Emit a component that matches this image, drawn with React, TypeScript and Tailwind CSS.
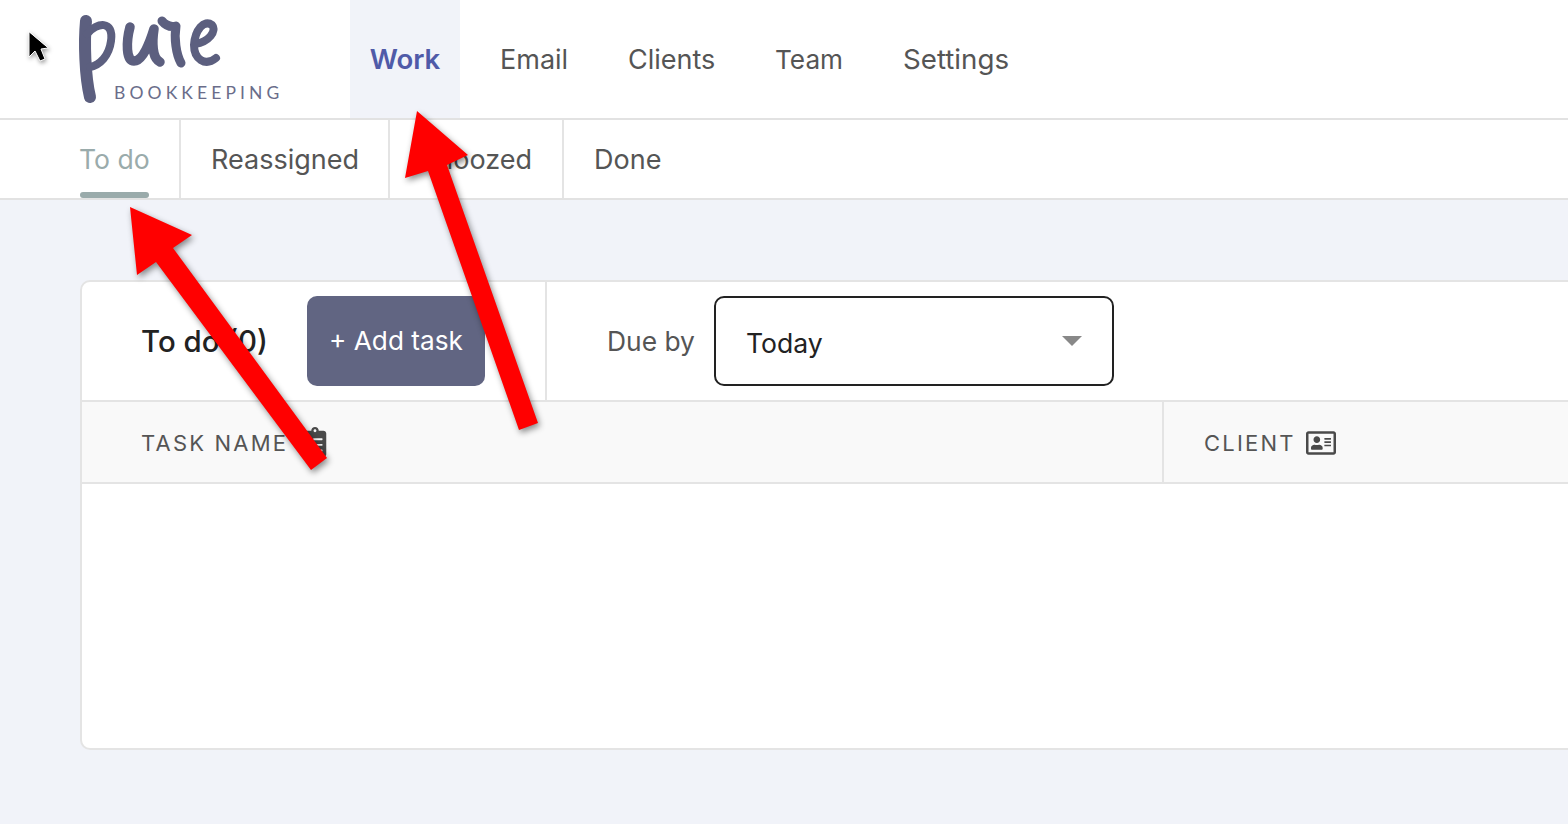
import React from 'react';
import { FaClipboardList, FaRegAddressCard } from 'react-icons/fa';

const navItems = [
  { label: 'Email', cls: 'w-[108px]' },
  { label: 'Clients', cls: 'w-[127px]' },
  { label: 'Team', cls: 'w-[108px] text-[26.2px]' },
  { label: 'Settings', cls: 'w-[146px] text-[27.7px]' },
];

const Logo: React.FC = () => (
  <div className="relative w-[350px] h-full shrink-0">
    <svg width="240" height="118" viewBox="0 0 240 118" className="absolute left-0 top-0" fill="none" stroke="#5c5f7f" strokeLinecap="round" strokeLinejoin="round">
      {/* cursor */}
      <path d="M29 32 L29 57 L35 51 L40 61 L45 59 L41 49 L48 48 Z" fill="#000" stroke="#fff" strokeWidth="1" className="drop-shadow-[1px_2px_2px_rgba(0,0,0,0.4)]" />
      {/* pure script mark */}
      <path d="M86 21 C84 42 85 76 90 97" strokeWidth="12" />
      <path d="M87 34 C97 22 114 20 111 41 C109 56 100 65 90 67" strokeWidth="8" />
      <path d="M130 27 C126 42 126 61 134 61 C143 61 150 42 154 29 C152 42 152 58 160 62" strokeWidth="9.5" />
      <path d="M162 21 C167 27 172 27 176 26 C174 38 176 54 181 63" strokeWidth="9" />
      <path d="M195 44 C209 42 217 31 212 25 C204 19 195 30 194 45 C194 59 205 67 216 58" strokeWidth="8" />
    </svg>
    <span className="absolute left-[114px] top-[83px] text-[17.5px] leading-[20px] tracking-[4.1px] text-[#6a6d8a] font-['Lato']">BOOKKEEPING</span>
  </div>
);

const SubTab: React.FC<{ label: string; active?: boolean; width: string; pad: string }> = ({ label, active, width, pad }) => (
  <div className={`relative h-full flex items-center border-r-2 border-[#e4e4e4] pt-[2px] ${width} ${pad}`}>
    <span className={active ? 'text-[#9aabab] text-[26.6px]' : 'text-[#555555]'}>{label}</span>
    {active && <div className="absolute left-[80px] w-[69px] bottom-0 h-[6px] rounded-[3px] bg-[#9aabab]" />}
  </div>
);

const Arrows: React.FC = () => (
  <svg width="1568" height="824" viewBox="0 0 1568 824" className="absolute left-0 top-0 pointer-events-none drop-shadow-[2px_3px_3px_rgba(0,0,0,0.45)]">
    <path d="M130 207 L192 235 L173 248 L327 458 L311 470 L156 262 L137 275 Z" fill="#ff0000" />
    <path d="M417 111 L468 155 L447 165 L538 423 L519 430 L428 171 L405 178 Z" fill="#ff0000" />
  </svg>
);

export default function App() {
  return (
    <div className="relative h-[824px] w-full overflow-hidden bg-[#f1f3f9] font-['Inter',sans-serif] text-[27px] text-[#555555]">
      <header className="h-[120px] bg-white border-b-2 border-[#e2e2e2] flex">
        <Logo />
        <nav className="flex h-full gap-[20px]">
          <div className="h-full w-[110px] pt-[2px] flex items-center justify-center bg-[#f1f3f9] font-semibold text-[27.6px] text-[#4f5aa8]">Work</div>
          {navItems.map((item) => (
            <div key={item.label} className={`h-full pl-[20px] pt-[2px] flex items-center whitespace-nowrap ${item.cls}`}>{item.label}</div>
          ))}
        </nav>
      </header>

      <div className="h-[80px] bg-white border-b-2 border-[#e2e2e2] flex">
        <SubTab label="To do" active width="w-[181px]" pad="pl-[79px]" />
        <SubTab label="Reassigned" width="w-[209px]" pad="pl-[30px]" />
        <SubTab label="Snoozed" width="w-[174px]" pad="pl-[30px]" />
        <div className="h-full flex items-center pl-[30px] pt-[2px]">Done</div>
      </div>

      <main className="pl-[80px] pt-[80px]">
        <div className="w-[1600px] h-[470px] bg-white border-2 border-[#e4e4e4] rounded-[10px] overflow-hidden">
          <div className="h-[120px] flex border-b-2 border-[#e4e4e4]">
            <div className="w-[465px] flex items-center border-r-2 border-[#e4e4e4] pl-[59px]">
              <span className="w-[166px] pt-[2px] whitespace-nowrap text-[29.4px] font-medium text-[#222222]">To do (0)</span>
              <button className="w-[178px] h-[90px] rounded-[10px] bg-[#616582] text-white text-[26.2px]">+ Add task</button>
            </div>
            <div className="flex items-center pl-[60px]">
              <span className="w-[87px] pt-[2px] whitespace-nowrap text-[26.4px]">Due by</span>
              <div className="ml-[20px] w-[400px] h-[90px] rounded-[10px] border-2 border-[#222222] flex items-center justify-between pl-[30px] pr-[30px] text-[#222222] text-[26.6px]">
                <span className="pt-[5px]">Today</span>
                <svg width="20" height="10" viewBox="0 0 20 10"><path d="M0 0 H20 L10 10 Z" fill="#888888" /></svg>
              </div>
            </div>
          </div>
          <div className="h-[82px] flex bg-[#f9f9f9] border-b-2 border-[#e4e4e4] text-[22px] tracking-[2.2px] text-[#555555]">
            <div className="w-[1082px] border-r-2 border-[#e4e4e4] flex items-center pl-[59px] gap-[12px]">
              <span className="pt-[3px]">TASK NAME</span>
              <FaClipboardList size={30} className="text-[#4a4a4a]" />
            </div>
            <div className="flex items-center pl-[40px] gap-[10px]">
              <span className="pt-[3px]">CLIENT</span>
              <FaRegAddressCard size={30} className="text-[#4a4a4a] mt-[1px]" />
            </div>
          </div>
        </div>
      </main>

      <Arrows />
    </div>
  );
}
